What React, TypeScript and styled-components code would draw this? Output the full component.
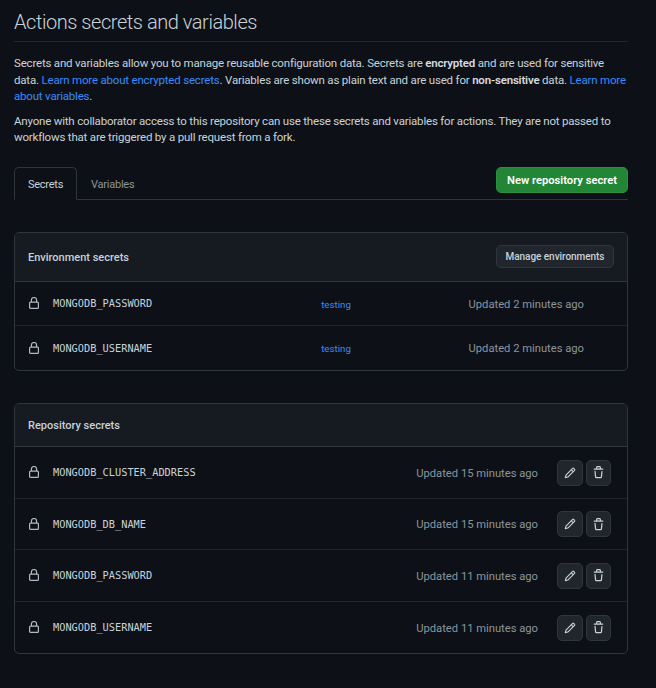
import React from "react";
import styled, { createGlobalStyle } from "styled-components";

const Global = createGlobalStyle`
  html, body { margin: 0; padding: 0; background: #0d1117; }
  body { font-family: Roboto, "Liberation Sans", sans-serif; color: #c9d1d9; }
`;

const Page = styled.div`
  width: 656px;
  height: 688px;
  overflow: hidden;
  box-sizing: border-box;
  padding: 0 28px 0 14px;
  background: #0d1117;
`;
const Title = styled.h1`
  margin: 0;
  height: 41px;
  border-bottom: 1px solid #21262d;
  font-size: 20px;
  font-weight: 300;
  line-height: 44px;
  letter-spacing: -0.45px;
  color: #c9d1d9;
`;
const Para = styled.p<{ $top: number }>`
  margin: ${(p) => p.$top}px 0 0;
  font-size: 11.5px;
  letter-spacing: -0.19px;
  line-height: 16.5px;
  color: #c9d1d9;
  strong { font-weight: 600; color: #d5dbe1; }
  a { color: #388bfd; text-decoration: none; }
`;
const TabBar = styled.div`
  margin-top: 21px;
  height: 32px;
  display: flex;
  align-items: flex-start;
  border-bottom: 1px solid #30363d;
`;
const Tab = styled.div<{ $active?: boolean }>`
  box-sizing: border-box;
  height: 33px;
  padding: 0 13px;
  line-height: 33px;
  font-size: 11px;
  letter-spacing: -0.25px;
  border: 1px solid ${(p) => (p.$active ? "#30363d" : "transparent")};
  border-bottom: 1px solid ${(p) => (p.$active ? "#0d1117" : "transparent")};
  border-radius: 5px 5px 0 0;
  color: ${(p) => (p.$active ? "#c9d1d9" : "#8b949e")};
`;
const NewButton = styled.div`
  margin-left: auto;
  width: 132px;
  height: 26px;
  box-sizing: border-box;
  background: #238636;
  border: 1px solid #2a8f3f;
  border-radius: 5px;
  color: #fff;
  font-size: 11.2px;
  font-weight: 600;
  text-align: center;
  line-height: 25px;
`;
const Card = styled.section<{ $top: number }>`
  margin-top: ${(p) => p.$top}px;
  border: 1px solid #30363d;
  border-radius: 5px;
  overflow: hidden;
`;
const CardHead = styled.div<{ $height: number }>`
  height: ${(p) => p.$height}px;
  box-sizing: border-box;
  display: flex;
  align-items: center;
  justify-content: space-between;
  padding: 0 13px;
  background: #161b22;
  border-bottom: 1px solid #30363d;
`;
const CardTitle = styled.h2`
  margin: 1px 0 0;
  font-size: 11px;
  font-weight: 500;
  color: #c9d1d9;
`;
const ManageButton = styled.div`
  width: 118px;
  height: 23px;
  box-sizing: border-box;
  background: #21262d;
  border: 1px solid #30363d;
  border-radius: 5px;
  font-size: 10px;
  font-weight: 500;
  letter-spacing: -0.05px;
  text-align: center;
  line-height: 22px;
  color: #c9d1d9;
`;
const Row = styled.div<{ $height: number; $last?: boolean }>`
  height: ${(p) => p.$height}px;
  box-sizing: border-box;
  display: flex;
  align-items: center;
  padding: 0 16px 0 14px;
  border-bottom: ${(p) => (p.$last ? "none" : "1px solid #21262d")};
`;
const LockWrap = styled.span`
  width: 10px;
  height: 12px;
  display: inline-flex;
  color: #b1bac4;
  margin-right: 14px;
  flex: none;
`;
const SecretName = styled.code`
  font-family: "DejaVu Sans Mono", "Liberation Mono", monospace;
  font-size: 10.3px;
  color: #c9d1d9;
  flex: none;
`;
const EnvName = styled.a`
  margin: 2px 0 0 169px;
  font-size: 9.7px;
  color: #388bfd;
`;
const Updated = styled.span<{ $right: number }>`
  margin: 2px ${(p) => p.$right}px 0 auto;
  font-size: 11.2px;
  color: #8b949e;
`;
const IconButton = styled.div<{ $width: number }>`
  width: ${(p) => p.$width}px;
  height: 26px;
  margin-top: 1px;
  box-sizing: border-box;
  display: flex;
  align-items: center;
  justify-content: center;
  background: #21262d;
  border: 1px solid #30363d;
  border-radius: 5px;
  color: #c9d1d9;
  & + & { margin-left: 3px; }
`;

const Lock = () => (
  <LockWrap>
    <svg width="10" height="12" viewBox="0 0 10 12" fill="none" stroke="currentColor" strokeWidth="1.2">
      <rect x="0.6" y="5.1" width="8.8" height="6.3" rx="1" />
      <path d="M2.4 5V3.1a2.6 2.6 0 0 1 5.2 0V5" />
    </svg>
  </LockWrap>
);
const Pencil = () => (
  <svg width="12" height="12" viewBox="0 0 16 16" fill="currentColor">
    <path d="M11.013 1.427a1.75 1.75 0 0 1 2.474 0l1.086 1.086a1.75 1.75 0 0 1 0 2.474l-8.61 8.61c-.21.21-.47.364-.756.445l-3.251.93a.75.75 0 0 1-.927-.928l.929-3.25c.081-.286.235-.547.445-.758l8.61-8.61Zm.176 4.823L9.75 4.81l-6.286 6.287a.253.253 0 0 0-.064.108l-.558 1.953 1.953-.558a.253.253 0 0 0 .108-.064Zm1.238-3.763a.25.25 0 0 0-.354 0L10.811 3.75l1.439 1.44 1.263-1.263a.25.25 0 0 0 0-.354Z" />
  </svg>
);
const Trash = () => (
  <svg width="13" height="13" viewBox="0 0 16 16" fill="currentColor">
    <path d="M11 1.75V3h2.25a.75.75 0 0 1 0 1.5H2.75a.75.75 0 0 1 0-1.5H5V1.75C5 .784 5.784 0 6.75 0h2.5C10.216 0 11 .784 11 1.75ZM4.496 6.675l.66 6.6a.25.25 0 0 0 .249.225h5.19a.25.25 0 0 0 .249-.225l.66-6.6a.75.75 0 0 1 1.492.149l-.66 6.6A1.748 1.748 0 0 1 10.595 15h-5.19a1.75 1.75 0 0 1-1.741-1.575l-.66-6.6a.75.75 0 1 1 1.492-.15ZM6.5 1.75V3h3V1.75a.25.25 0 0 0-.25-.25h-2.5a.25.25 0 0 0-.25.25Z" />
  </svg>
);

const envRows = [
  { name: "MONGODB_PASSWORD", h: 44 },
  { name: "MONGODB_USERNAME", h: 44 },
];
const repoRows = [
  { name: "MONGODB_CLUSTER_ADDRESS", time: "15", h: 52 },
  { name: "MONGODB_DB_NAME", time: "15", h: 51 },
  { name: "MONGODB_PASSWORD", time: "11", h: 52 },
  { name: "MONGODB_USERNAME", time: "11", h: 51 },
];

export default function App() {
  return (
    <Page>
      <Global />
      <Title>Actions secrets and variables</Title>
      <Para $top={13}>
        Secrets and variables allow you to manage reusable configuration data. Secrets are <strong>encrypted</strong> and are used for sensitive data.{" "}
        <a>Learn more about encrypted secrets</a>. Variables are shown as plain text and are used for <strong>non-sensitive</strong> data. <a>Learn more about variables</a>.
      </Para>
      <Para $top={8}>
        Anyone with collaborator access to this repository can use these secrets and variables for actions. They are not passed to workflows that are triggered by a pull request from a fork.
      </Para>
      <TabBar>
        <Tab $active>Secrets</Tab>
        <Tab>Variables</Tab>
        <NewButton>New repository secret</NewButton>
      </TabBar>
      <Card $top={32}>
        <CardHead $height={49}>
          <CardTitle>Environment secrets</CardTitle>
          <ManageButton>Manage environments</ManageButton>
        </CardHead>
        {envRows.map((r, i) => (
          <Row key={r.name} $height={r.h} $last={i === envRows.length - 1}>
            <Lock />
            <SecretName>{r.name}</SecretName>
            <EnvName>testing</EnvName>
            <Updated $right={27}>Updated 2 minutes ago</Updated>
          </Row>
        ))}
      </Card>
      <Card $top={32}>
        <CardHead $height={43}>
          <CardTitle>Repository secrets</CardTitle>
        </CardHead>
        {repoRows.map((r, i) => (
          <Row key={r.name} $height={r.h} $last={i === repoRows.length - 1}>
            <Lock />
            <SecretName>{r.name}</SecretName>
            <Updated $right={19}>Updated {r.time} minutes ago</Updated>
            <IconButton $width={26}><Pencil /></IconButton>
            <IconButton $width={25}><Trash /></IconButton>
          </Row>
        ))}
      </Card>
    </Page>
  );
}
